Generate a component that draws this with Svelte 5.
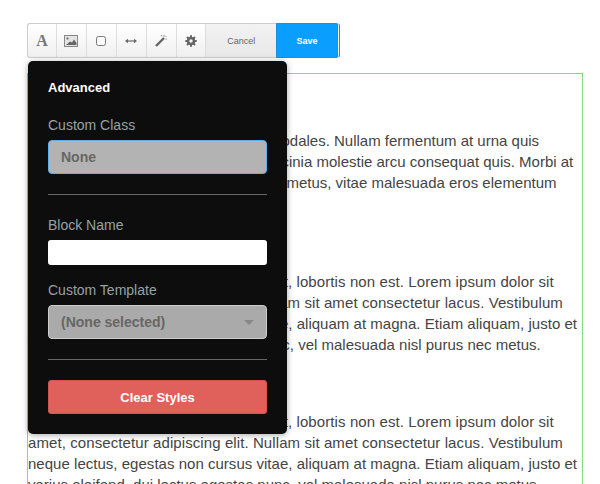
<script>
  const tools = ['type', 'image', 'box', 'width', 'wand', 'gear'];

  const paragraphs = [
    [
      'Lorem ipsum dolor sit amet, conubia sodales. Nullam fermentum at urna quis',
      'ligula vestibulum eu pretium orci vel lacinia molestie arcu consequat quis. Morbi at',
      'lorem dolor, ac imperdiet ipsum sit nisl metus, vitae malesuada eros elementum'
    ],
    [
      'Lorem ipsum dolor sit amet, vel ut velit, lobortis non est. Lorem ipsum dolor sit',
      'amet, consectetur adipiscing elit. Nullam sit amet consectetur lacus. Vestibulum',
      'neque lectus, egestas non cursus vitae, aliquam at magna. Etiam aliquam, justo et',
      'varius eleifend, dui lectus egestas nunc, vel malesuada nisl purus nec metus.'
    ],
    [
      'Lorem ipsum dolor sit amet, vel ut velit, lobortis non est. Lorem ipsum dolor sit',
      'amet, consectetur adipiscing elit. Nullam sit amet consectetur lacus. Vestibulum',
      'neque lectus, egestas non cursus vitae, aliquam at magna. Etiam aliquam, justo et',
      'varius eleifend, dui lectus egestas nunc, vel malesuada nisl purus nec metus.'
    ]
  ];
</script>

<div class="page">
  <div class="toolbar">
    {#each tools as tool}
      <button class="tool">
        {#if tool === 'type'}
          <span class="glyph">A</span>
        {:else if tool === 'image'}
          <svg width="14" height="12" viewBox="0 0 14 12">
            <rect x="0.5" y="0.5" width="13" height="11" fill="#e4e4e4" stroke="#888" />
            <path d="M2 10 L6 6.5 L8 7.5 L10 4.5 L12.5 8 V10 Z" fill="#666" />
            <circle cx="3.5" cy="3.5" r="1.1" fill="#666" />
          </svg>
        {:else if tool === 'box'}
          <svg width="12" height="12" viewBox="0 0 12 12">
            <rect x="1.5" y="1.5" width="9" height="9" rx="2" fill="#fafafa" stroke="#777" />
          </svg>
        {:else if tool === 'width'}
          <svg width="12" height="8" viewBox="0 0 12 8">
            <path d="M2 4 H10" stroke="#666" stroke-width="1.2" />
            <path d="M0 4 L3 1.7 V6.3 Z M12 4 L9 1.7 V6.3 Z" fill="#666" />
          </svg>
        {:else if tool === 'wand'}
          <svg width="13" height="13" viewBox="0 0 13 13">
            <path d="M1 12 L9 4" stroke="#666" stroke-width="2.4" />
            <path d="M9 1 V3 M11.5 2 L10.5 3 M12 5 H10.5 M6 1 L7 2.5" stroke="#999" stroke-width="1" />
          </svg>
        {:else}
          <svg width="12" height="12" viewBox="0 0 12 12">
            <path d="M6 3 A3 3 0 1 0 6 9 A3 3 0 1 0 6 3 Z" fill="none" stroke="#666" stroke-width="2.6" />
            <path d="M6 0.3 V2.5 M6 9.5 V11.7 M0.3 6 H2.5 M9.5 6 H11.7 M2 2 L3.5 3.5 M8.5 8.5 L10 10 M2 10 L3.5 8.5 M8.5 3.5 L10 2" stroke="#666" stroke-width="2" />
          </svg>
        {/if}
      </button>
    {/each}
    <button class="cancel">Cancel</button>
    <button class="save">Save</button>
  </div>

  <div class="content">
    {#each paragraphs as lines}
      <p>
        {#each lines as line}
          <span class="line">{line}</span>
        {/each}
      </p>
    {/each}
  </div>

  <div class="popover">
    <h4>Advanced</h4>
    <div class="label first">Custom Class</div>
    <div class="field active">None</div>
    <hr />
    <div class="label">Block Name</div>
    <div class="input"></div>
    <div class="label second">Custom Template</div>
    <div class="field select">(None selected)<i class="caret"></i></div>
    <hr />
    <button class="clear">Clear Styles</button>
  </div>
</div>

<style>
  :global(body) {
    margin: 0;
    background: #fff;
    overflow: hidden;
    font-family: "Liberation Sans", Arial, sans-serif;
  }

  .page {
    position: relative;
    height: 484px;
    overflow: hidden;
    padding: 23px 0 0 27px;
    box-sizing: border-box;
  }

  .toolbar {
    display: flex;
    box-sizing: border-box;
    width: 313px;
    height: 35px;
    border: 1px solid #ccc;
    border-right-color: #1b8fdc;
    border-radius: 3px;
    background: linear-gradient(#fff, #f0f0f0);
  }

  button {
    font-family: inherit;
    padding: 0;
    border: 0;
    background: none;
  }

  .tool {
    display: flex;
    align-items: center;
    justify-content: center;
    box-sizing: border-box;
    width: 30px;
    border-right: 1px solid #ddd;
  }

  .tool:first-child {
    width: 29px;
  }

  .glyph {
    font: bold 16px "Liberation Serif", serif;
    color: #777;
  }

  .cancel {
    width: 70px;
    font-size: 9px;
    color: #666;
    background: linear-gradient(#f2f2f2, #e8e8e8);
  }

  .save {
    box-sizing: border-box;
    width: 62px;
    margin: -1px 1px -1px 0;
    border: 1px solid #1b8fdc;
    border-radius: 0 2px 2px 0;
    background: #0a9eff;
    color: #fff;
    font-size: 9px;
    font-weight: bold;
  }

  .content {
    box-sizing: border-box;
    width: 556px;
    height: 500px;
    margin-top: 15px;
    border: 1px solid #7be07b;
    padding-top: 56px;
    color: #444;
    font-size: 15px;
    line-height: 21px;
  }

  p {
    margin: 0 0 56px;
  }

  p:first-child {
    margin-bottom: 78px;
  }

  .line {
    display: block;
    white-space: nowrap;
  }

  p + p .line:nth-child(1) {
    letter-spacing: 0.1px;
  }

  p + p .line:nth-child(2) {
    letter-spacing: 0.09px;
  }

  p + p .line:nth-child(3) {
    letter-spacing: 0.025px;
  }

  .popover {
    position: absolute;
    left: 28px;
    top: 61px;
    box-sizing: border-box;
    width: 259px;
    height: 373px;
    padding: 20px;
    border-radius: 5px;
    background: #0d0d0d;
    box-shadow: 0 1px 6px rgba(0, 0, 0, 0.35);
  }

  h4 {
    margin: 0;
    font-size: 13px;
    line-height: 14px;
    color: #fff;
  }

  .label {
    margin-top: 23px;
    font-size: 14px;
    line-height: 15px;
    color: #97a3a3;
  }

  .label.second {
    margin-top: 18px;
  }

  .field {
    position: relative;
    box-sizing: border-box;
    height: 34px;
    margin-top: 7px;
    padding-left: 12px;
    border: 1px solid #ccc;
    border-radius: 4px;
    background: #aaa;
    color: #666;
    font-size: 14px;
    font-weight: bold;
    line-height: 32px;
  }

  .field.active {
    background: #b3b3b3;
    border-color: #5cb0ee;
  }

  .caret {
    position: absolute;
    right: 12px;
    top: 14px;
    border: 5px solid transparent;
    border-top: 5px solid #888;
    border-bottom: 0;
  }

  .input {
    height: 25px;
    margin-top: 7px;
    border-radius: 3px;
    background: #fff;
  }

  hr {
    height: 1px;
    margin: 20px 0 0;
    border: 0;
    background: #666;
  }

  .clear {
    display: block;
    box-sizing: border-box;
    width: 100%;
    height: 34px;
    margin-top: 20px;
    border: 1px solid #d9534f;
    border-radius: 3px;
    background: #e0605c;
    color: #fff;
    font-size: 13px;
    font-weight: bold;
  }
</style>
